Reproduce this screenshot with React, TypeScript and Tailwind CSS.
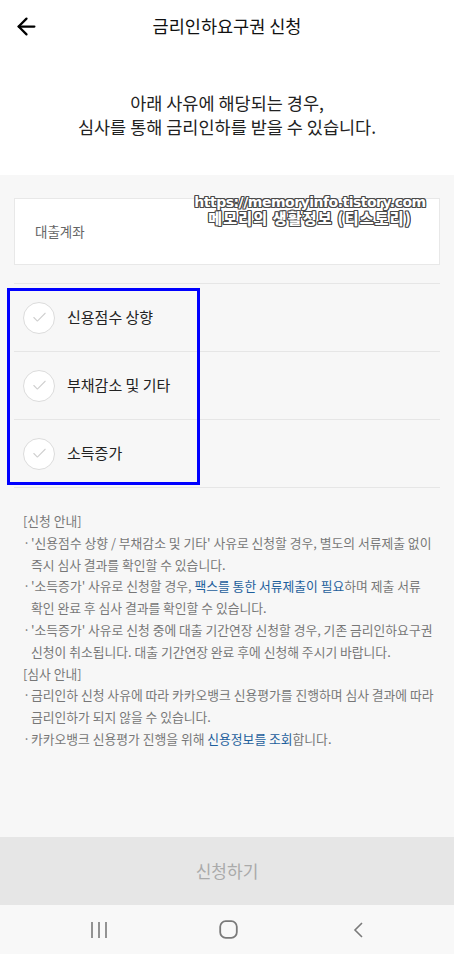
import { ArrowLeft, Check } from 'lucide-react';

const reasons = ['신용점수 상향', '부채감소 및 기타', '소득증가'];

const outline =
  '[text-shadow:1px_0_0_#4a4a4a,-1px_0_0_#4a4a4a,0_1px_0_#4a4a4a,0_-1px_0_#4a4a4a,1px_1px_0_#4a4a4a,-1px_-1px_0_#4a4a4a,1px_-1px_0_#4a4a4a,-1px_1px_0_#4a4a4a]';

const Bullet = ({ children }: { children: React.ReactNode }) => (
  <div className="flex">
    <span className="w-[8px] shrink-0">·</span>
    <div>{children}</div>
  </div>
);

const App = () => {
  return (
    <div className="relative h-[954px] w-[454px] flex flex-col bg-[#f7f7f7] font-['Noto_Sans_CJK_KR',sans-serif] overflow-hidden">
      {/* header */}
      <div className="bg-white h-[175px] shrink-0">
        <div className="relative h-[52px] flex items-center justify-center">
          <ArrowLeft className="absolute left-[12px] top-[13px] w-[29px] h-[27px] text-black" strokeWidth={2} />
          <h1 className="text-[17.5px] text-[#111]">금리인하요구권 신청</h1>
        </div>
        <p className="mt-[39px] text-center text-[17.5px] leading-[24px] text-[#222]">
          아래 사유에 해당되는 경우,
          <br />
          심사를 통해 금리인하를 받을 수 있습니다.
        </p>
      </div>

      {/* body */}
      <div className="flex-1 px-[14px] pt-[23px]">
        <div className="bg-white border border-[#e8e8e8] h-[67px] flex items-center px-[20px]">
          <span className="text-[13.5px] text-[#666]">대출계좌</span>
        </div>

        <div className="mt-[18px] border-t border-[#e6e6e6]">
          {reasons.map((reason) => (
            <div key={reason} className="h-[68px] flex items-center border-b border-[#e6e6e6]">
              <div className="ml-[9px] w-[32px] h-[32px] rounded-full border border-[#dcdcdc] bg-white flex items-center justify-center">
                <Check className="w-[17px] h-[17px] text-[#cfcfcf]" strokeWidth={1.5} />
              </div>
              <span className="ml-[12px] text-[15px] text-[#222]">{reason}</span>
            </div>
          ))}
        </div>

        <div className="mt-[22px] px-[9px] text-[12.8px] leading-[21.8px] text-[#777] whitespace-nowrap">
          <div>[신청 안내]</div>
          <Bullet>
            '신용점수 상향 / 부채감소 및 기타' 사유로 신청할 경우, 별도의 서류제출 없이
            <br />
            즉시 심사 결과를 확인할 수 있습니다.
          </Bullet>
          <Bullet>
            '소득증가' 사유로 신청할 경우, <span className="text-[#1e5f9c]">팩스를 통한 서류제출이 필요</span>하며 제출 서류
            <br />
            확인 완료 후 심사 결과를 확인할 수 있습니다.
          </Bullet>
          <Bullet>
            '소득증가' 사유로 신청 중에 대출 기간연장 신청할 경우, 기존 금리인하요구권
            <br />
            신청이 취소됩니다. 대출 기간연장 완료 후에 신청해 주시기 바랍니다.
          </Bullet>
          <div>[심사 안내]</div>
          <Bullet>
            금리인하 신청 사유에 따라 카카오뱅크 신용평가를 진행하며 심사 결과에 따라
            <br />
            금리인하가 되지 않을 수 있습니다.
          </Bullet>
          <Bullet>
            카카오뱅크 신용평가 진행을 위해 <span className="text-[#1e5f9c]">신용정보를 조회</span>합니다.
          </Bullet>
        </div>
      </div>

      {/* submit */}
      <div className="h-[68px] shrink-0 bg-[#e6e6e6] flex items-center justify-center">
        <span className="text-[17px] text-[#aaaaaa]">신청하기</span>
      </div>

      {/* system nav */}
      <div className="h-[49px] shrink-0 bg-[#f8f8f8] flex items-center">
        <svg width="18" height="18" viewBox="0 0 18 18" className="ml-[90px]">
          <path d="M2 1v16M9 1v16M16 1v16" stroke="#7a7a7a" strokeWidth="1.6" />
        </svg>
        <svg width="19" height="19" viewBox="0 0 19 19" className="ml-[111px]">
          <rect x="1.2" y="1.2" width="16.6" height="16.6" rx="5.5" fill="none" stroke="#7a7a7a" strokeWidth="1.8" />
        </svg>
        <svg width="12" height="18" viewBox="0 0 12 18" className="ml-[114px]">
          <path d="M10 2L3 9l7 7" fill="none" stroke="#7a7a7a" strokeWidth="1.6" />
        </svg>
      </div>

      {/* annotation box */}
      <div className="absolute left-[7px] top-[288px] w-[193px] h-[197px] border-[3px] border-[#0000ff]" />

      {/* watermark */}
      <div
        className={`absolute left-[188px] top-[195px] w-[244px] text-center text-white font-black text-[14px] leading-[15px] font-['DejaVu_Sans','Noto_Sans_CJK_KR',sans-serif] tracking-[-0.5px] ${outline}`}
      >
        <div>https://memoryinfo.tistory.com</div>
        <div className="font-['Noto_Sans_CJK_KR',sans-serif] text-[15px] leading-[16px] tracking-[1.2px]">메모리의 생활정보 (티스토리)</div>
      </div>
    </div>
  );
};

export default App;
